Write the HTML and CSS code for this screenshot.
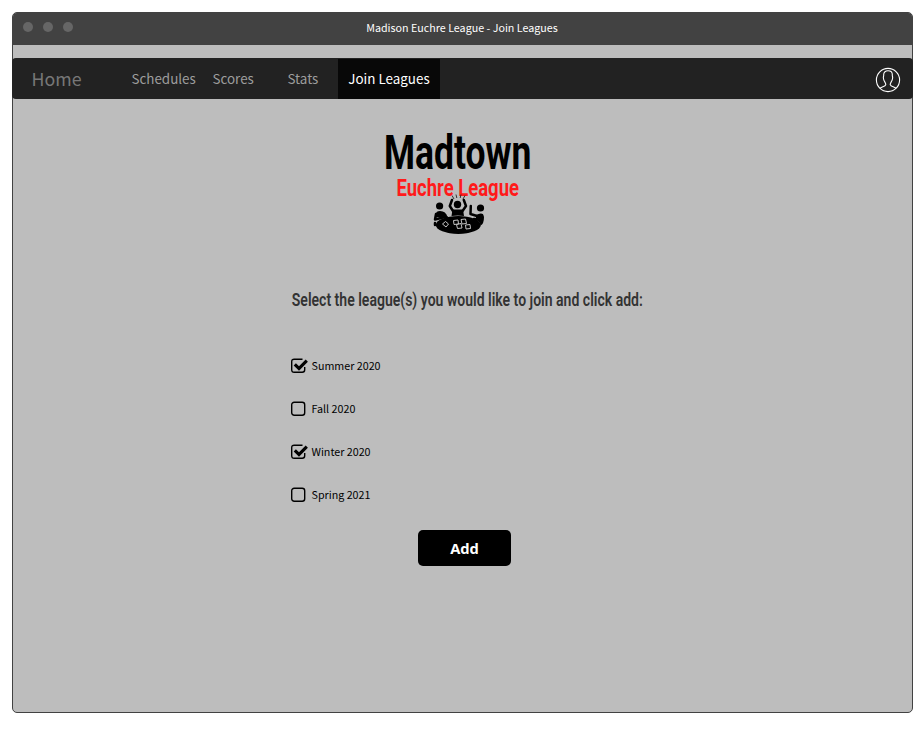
FILE: index.html
```html
<!DOCTYPE html>
<html lang="en">
<head>
<meta charset="utf-8">
<title>Madison Euchre League - Join Leagues</title>
<link rel="stylesheet" href="styles.css">
</head>
<body>
<div class="window">
  <header class="titlebar">
    <div class="dots"><i></i><i></i><i></i></div>
    <span class="title">Madison Euchre League - Join Leagues</span>
  </header>
  <nav class="nav">
    <a class="home">Home</a>
    <a class="schedules">Schedules</a>
    <a class="scores">Scores</a>
    <a class="stats">Stats</a>
    <a class="active">Join Leagues</a>
    <svg class="user" width="26" height="26" viewBox="0 0 26 26" fill="none" stroke="#fff" stroke-width="1.1">
      <circle cx="13" cy="13" r="11.600"/>
      <path d="M4.800 21.200C7 19.900 10.500 19.300 10.800 17.600C11 15.900 8.700 14.300 8.400 11.200C8.100 9.900 8.900 9.200 8.700 7.600C8.700 5 10.600 3.800 13 3.800S17.300 5 17.300 7.600C17.100 9.200 17.900 9.900 17.600 11.200C17.300 14.300 15 15.900 15.200 17.600C15.500 19.300 19 19.900 21.200 21.200"/>
    </svg>
  </nav>
  <main class="content">
    <svg class="logo" width="160" height="112" viewBox="0 0 160 112">
      <text class="logo-main" x="5" y="43" textLength="147.500" lengthAdjust="spacingAndGlyphs">Madtown</text>
      <text class="logo-sub" x="17.500" y="69.500" textLength="122.500" lengthAdjust="spacingAndGlyphs">Euchre League</text>
      <ellipse cx="79.300" cy="99" rx="22.500" ry="9"/>
      <circle cx="60.600" cy="80" r="3.600"/>
      <circle cx="78.500" cy="78.500" r="3.700"/>
      <circle cx="101.500" cy="82" r="3.600"/>
      <path d="M57 91V88Q57 85 61 85Q67 85 68.500 91L65 91.500Z"/>
      <path d="M72.500 90L73.500 83.500H84L85 90Q79 88.800 72.500 90Z"/>
      <path d="M97 91V89Q104 85 105 91Q105 98 101.500 99.500Q101 95 97 94Z"/>
      <g fill="none" stroke="#000" stroke-width="2.500" stroke-linecap="round" stroke-linejoin="round">
        <path d="M74 85L70.800 80L73 74M83.500 85L87 80L84.800 74M98 90L91.500 88L91.800 80M57 88L56 93.500L64 91.500L68 91.500M56 97V99M103 89L100 93.500L95 93"/>
      </g>
      <path d="M73 69.500L75 73M77 68.500L77.800 72M82 68.500L81.200 72M86 69.500L84 73" stroke="#222" stroke-width=".9"/>
      <g fill="none" stroke="#c4c4c4" stroke-width="1">
        <path d="M63.500 98L66.500 95.500L69.500 98L67 101ZM74.500 94.500L79 94L79.500 98L75 98.500ZM77.500 98.500L82 97.500L83 102L78.500 102.500ZM82 93.500L86.500 93L87.500 97.500L83 98ZM86.500 99L91 98.500L91.500 102.500L87 103Z"/>
      </g>
    </svg>
    <svg class="prompt" width="360" height="28" viewBox="0 0 360 28">
      <text x="3.800" y="20" textLength="351" lengthAdjust="spacingAndGlyphs">Select the league(s) you would like to join and click add:</text>
    </svg>
    <div class="options">
      <label><svg width="18" height="16" viewBox="0 0 18 16"><path class="box" d="M13.700 9V11.800Q13.700 14.300 11.200 14.300H3.200Q.7 14.300 .7 11.800V3.700Q.7 1.200 3.200 1.200H11.500"/><path d="M2.700 7.500L4.900 5.300L8 8.300L14.700 1.600L16.900 3.800L8 12.700Z"/></svg><span>Summer 2020</span></label>
      <label><svg width="18" height="16" viewBox="0 0 18 16"><rect class="box" x=".7" y="1.200" width="13" height="13.100" rx="2.500"/></svg><span>Fall 2020</span></label>
      <label><svg width="18" height="16" viewBox="0 0 18 16"><path class="box" d="M13.700 9V11.800Q13.700 14.300 11.200 14.300H3.200Q.7 14.300 .7 11.800V3.700Q.7 1.200 3.200 1.200H11.500"/><path d="M2.700 7.500L4.900 5.300L8 8.300L14.700 1.600L16.900 3.800L8 12.700Z"/></svg><span>Winter 2020</span></label>
      <label><svg width="18" height="16" viewBox="0 0 18 16"><rect class="box" x=".7" y="1.200" width="13" height="13.100" rx="2.500"/></svg><span>Spring 2021</span></label>
    </div>
    <button class="add">Add</button>
  </main>
</div>
</body>
</html>
```
FILE: styles.css
```css
* { box-sizing: border-box; }
body { margin: 0; padding: 12px; background: #fff; font-family: "Noto Sans CJK SC", "Open Sans", sans-serif; }
svg { display: block; overflow: visible; }
.window { width: 901px; height: 701px; border: 1px solid #424242; border-radius: 5px; background: #bdbdbd; }
.titlebar { height: 32px; background: #424242; border-radius: 4px 4px 0 0; display: grid; grid-template-columns: 1fr auto 1fr; align-items: center; }
.dots { display: flex; gap: 10px; padding: 0 0 4px 10px; }
.dots i { width: 10px; height: 10px; border-radius: 50%; background: #666; }
.title { font-size: 10.73px; line-height: 16px; color: #fff; padding: 0 1px 2px 0; }
.nav { display: flex; align-items: center; height: 41px; margin: 13px -1px 0; background: #222; border-radius: 4px; color: #9d9d9d; font-size: 13.4px; line-height: 38px; }
.nav a { height: 40px; }
.home { width: 100px; margin-left: 19.5px; font-size: 17.8px; color: #777; }
.schedules { width: 81px; }
.scores { width: 75px; }
.stats { width: 50.5px; }
.active { width: 102px; margin-top: 1px; text-align: center; background: #080808; color: #fff; }
.user { margin: 2px 12px 0 auto; }
.content { display: flex; flex-direction: column; }
.logo { margin: 27px 0 0 366px; }
.logo text { font-family: Roboto, sans-serif; font-weight: 700; }
.logo-main { font-size: 49px; }
.logo-sub { font-size: 24.5px; fill: #ff1a1a; }
.prompt { margin: 48px 0 0 275px; }
.prompt text { font-family: Roboto, sans-serif; font-weight: 600; font-size: 18.5px; fill: #333; }
.options { display: flex; flex-direction: column; gap: 27px; margin: 44px 0 0 278px; font-size: 10.73px; line-height: 16px; color: #000; }
.options label { display: flex; gap: 2.5px; height: 16px; }
.box { fill: none; stroke: #000; stroke-width: 1.4; }
.add { width: 93px; height: 36px; margin: 27px 0 0 405px; padding: 1px 0 0; border: 0; border-radius: 5px; background: #000; color: #fff; font: 700 14.7px/35px "Open Sans", sans-serif; }
```
